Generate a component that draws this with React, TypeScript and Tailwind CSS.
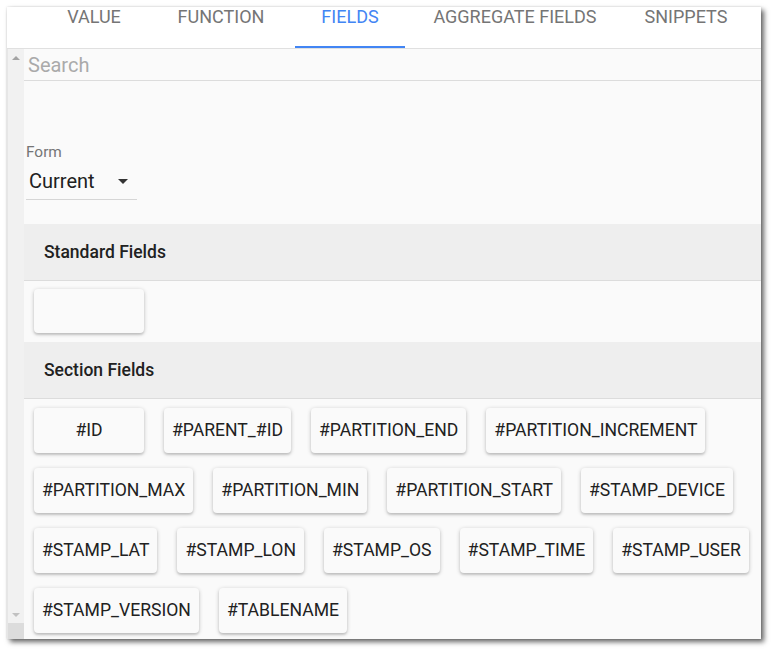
const tabs = [
  { label: "VALUE", w: "w-[106px]" },
  { label: "FUNCTION", w: "w-[148px]" },
  { label: "FIELDS", w: "w-[110px]", active: true },
  { label: "AGGREGATE FIELDS", w: "w-[220px]" },
  { label: "SNIPPETS", w: "w-[122px]" },
]

const sectionFields = [
  "#ID",
  "#PARENT_#ID",
  "#PARTITION_END",
  "#PARTITION_INCREMENT",
  "#PARTITION_MAX",
  "#PARTITION_MIN",
  "#PARTITION_START",
  "#STAMP_DEVICE",
  "#STAMP_LAT",
  "#STAMP_LON",
  "#STAMP_OS",
  "#STAMP_TIME",
  "#STAMP_USER",
  "#STAMP_VERSION",
  "#TABLENAME",
]

function Chip({ label }: { label?: string }) {
  return (
    <button className="flex h-[45px] min-w-[110px] items-center justify-center rounded-[4px] bg-[#fafafa] px-2 text-[17.6px] text-[#212121] shadow-[0_1px_4px_rgba(0,0,0,0.22),0_2px_2px_rgba(0,0,0,0.1)]">
      {label}
    </button>
  )
}

function SectionHeader({ title }: { title: string }) {
  return (
    <div className="flex h-[57px] items-center border-b border-[#dcdcdc] bg-[#eeeeee] pl-5 text-[17.5px] font-medium text-[#212121]">
      {title}
    </div>
  )
}

export default function App() {
  return (
    <div className="h-[655px] w-[777px] bg-white pl-[7px] pt-[7px] font-['Roboto',sans-serif]">
      <div className="flex h-[632px] w-[754px] flex-col overflow-hidden bg-white shadow-[3px_3px_5px_rgba(0,0,0,0.6),0_0_2px_rgba(0,0,0,0.15)]">
        {/* Tabs */}
        <div className="flex h-[42px] shrink-0 border-b border-[#e0e0e0] bg-white pl-[34px]">
          {tabs.map((t) => (
            <div key={t.label} className={`relative flex justify-center ${t.w}`}>
              <span
                className={`text-[18px] leading-[20px] ${t.active ? "text-[#4285f4]" : "text-[#757575]"}`}
              >
                {t.label}
              </span>
              {t.active && <div className="absolute bottom-0 left-0 right-0 h-[2px] bg-[#4285f4]" />}
            </div>
          ))}
        </div>

        <div className="flex min-h-0 flex-1">
          {/* Scrollbar */}
          <div className="flex w-[17px] shrink-0 flex-col border-l border-[#e6e6e6] bg-[#f1f1f1]">
            <div className="flex h-[16px] items-center justify-center pt-[2px]">
              <div className="h-0 w-0 border-x-[4px] border-b-[4px] border-x-transparent border-b-[#a3a3a3]" />
            </div>
            <div className="flex-1" />
            <div className="flex h-[16px] items-center justify-center">
              <div className="h-0 w-0 border-x-[4px] border-t-[4px] border-x-transparent border-t-[#c1c1c1]" />
            </div>
            <div className="h-[16px] bg-[#dcdcdc]" />
          </div>

          {/* Content */}
          <div className="flex-1 overflow-hidden bg-[#fafafa]">
            <div className="flex h-[32px] items-center border-b border-[#dcdcdc] pl-1 text-[20px] text-[#aaaaaa]">
              Search
            </div>

            <div className="pl-[2px] pt-[62px]">
              <div className="text-[15.4px] leading-[19px] text-[#757575]">Form</div>
              <div className="flex w-[111px] items-center justify-between border-b border-[#d6d6d6] pb-[6px] pl-[3px] pr-[9px] pt-[8px]">
                <span className="text-[20px] leading-[23px] text-[#212121]">Current</span>
                <div className="h-0 w-0 border-x-[5px] border-t-[5px] border-x-transparent border-t-[#333333]" />
              </div>
            </div>

            <div className="mt-[24px]">
              <SectionHeader title="Standard Fields" />
              <div className="flex pb-[9px] pl-[10px] pt-[8px]">
                <button className="h-[44px] w-[110px] rounded-[4px] bg-[#fafafa] shadow-[0_1px_4px_rgba(0,0,0,0.22),0_2px_2px_rgba(0,0,0,0.1)]" />
              </div>
              <SectionHeader title="Section Fields" />
              <div className="flex flex-wrap gap-x-5 gap-y-[15px] pl-[10px] pr-[8px] pt-[9px]">
                {sectionFields.map((f) => (
                  <Chip key={f} label={f} />
                ))}
              </div>
            </div>
          </div>
        </div>
      </div>
    </div>
  )
}
